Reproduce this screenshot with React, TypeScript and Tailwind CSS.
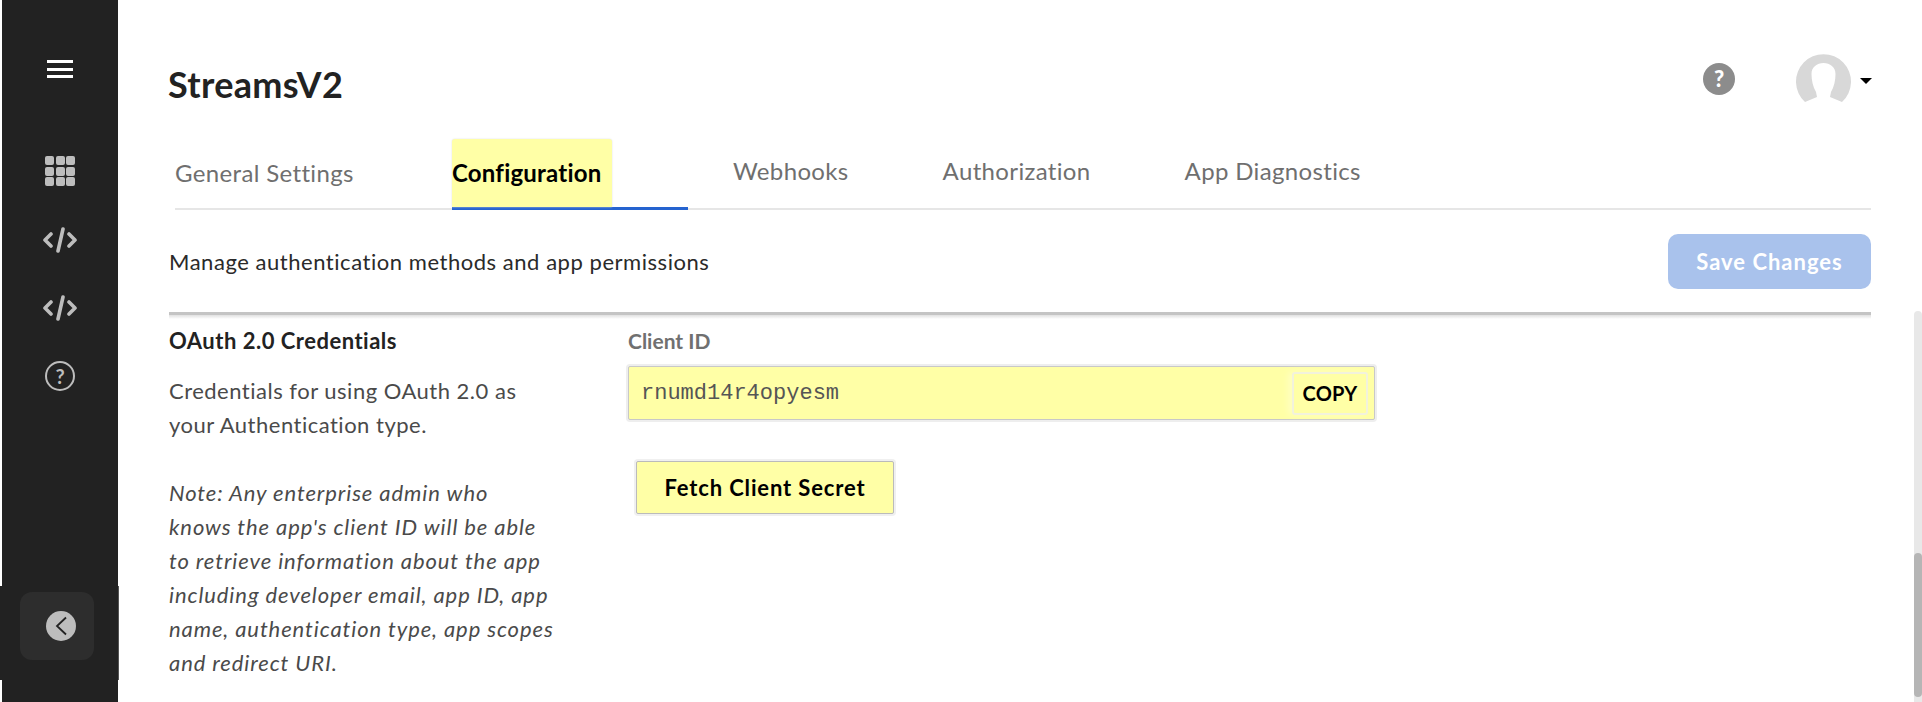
import React from "react";

const tabs = ["Webhooks", "Authorization", "App Diagnostics"];

const CodeIcon = () => (
  <svg width="36" height="26" viewBox="0 0 36 26" fill="none" stroke="#bdbdbd" strokeWidth="3.6" strokeLinecap="round" strokeLinejoin="round">
    <path d="M9 7 3 13l6 6M27 7l6 6-6 6M21 2l-5 22" />
  </svg>
);

const Sidebar = () => (
  <div className="relative w-[116px] shrink-0 ml-[2px] h-[702px] bg-[#222222] flex flex-col items-center">
    <div className="mt-[60px] w-[26px] flex flex-col gap-[4.5px]">
      <div className="h-[3px] bg-white" />
      <div className="h-[3px] bg-white" />
      <div className="h-[3px] bg-white" />
    </div>
    <div className="mt-[78px] grid grid-cols-3 gap-[1.5px] w-[30px]">
      {Array.from({ length: 9 }).map((_, i) => (
        <div key={i} className="h-[9px] rounded-[2px] bg-[#bdbdbd]" />
      ))}
    </div>
    <div className="mt-[41px]"><CodeIcon /></div>
    <div className="mt-[42px]"><CodeIcon /></div>
    <div className="mt-[40px] w-[30px] h-[30px] rounded-full border-2 border-[#bdbdbd] flex items-center justify-center text-[#bdbdbd] text-[20px] font-bold leading-none">?</div>
    <div className="absolute left-[-2px] top-[586px] w-[119px] h-[94px] pt-[6px] pl-[20px] bg-[#222222] border-r border-[#555555]">
      <div className="w-[74px] h-[68px] pl-[26px] rounded-[12px] bg-[#2d2d2d] flex items-center">
        <div className="w-[30px] h-[30px] rounded-full bg-[#bdbdbd] flex items-center justify-center">
          <svg width="14" height="20" viewBox="0 0 14 20" fill="none" stroke="#222222" strokeWidth="1.8">
            <path d="M12 1.5 3 10l9 8.5" />
          </svg>
        </div>
      </div>
    </div>
  </div>
);

const Header = () => (
  <div className="flex items-start justify-between h-[135px]">
    <h1 className="mt-[60px] -ml-[1px] text-[36px] leading-[48px] font-bold tracking-[0.3px] text-[#222222]">StreamsV2</h1>
    <div className="flex items-start mt-[54px] -mr-[1px]">
      <div className="mt-[9px] w-[32px] h-[32px] rounded-full bg-[#8c8c8c] flex items-center justify-center text-white text-[22px] font-black leading-none">?</div>
      <svg className="ml-[61px]" width="55" height="48" viewBox="0 0 55 48">
        <path
          fill="#d8d8d8"
          d="M9 48A27.5 27.5 0 1 1 46 48L34 43 35 38C38 33 39.5 26 39.5 20 39.5 13 34 9 27.5 9 21 9 15.5 13 15.5 20 15.5 26 17 33 20 38L21 43Z"
        />
      </svg>
      <div className="ml-[9px] mt-[24px] w-0 h-0 border-x-[6px] border-x-transparent border-t-[6px] border-t-black" />
    </div>
  </div>
);

const Tabs = () => (
  <div className="flex items-end h-[75px] border-b-2 border-[#e6e6e6] ml-[6px] text-[24px] tracking-[0.35px] text-[#6f6f6f]">
    <div className="w-[277px] h-[73px] flex items-center pt-[3px]">General Settings</div>
    <div className="w-[236px] h-[75px] -mb-[2px] pt-[4px] border-b-[3px] border-[#2563cf]">
      <div className="h-[68px] w-[160px] bg-[#ffffa6] rounded-t-[3px] shadow-[0_0_2px_#dddddd] flex items-center text-black font-bold tracking-[0.2px]">Configuration</div>
    </div>
    <div className="flex h-[73px] items-center pb-[1px]">
      {tabs.map((t, i) => (
        <div key={t} className={i === 0 ? "ml-[45px]" : "ml-[94px]"}>{t}</div>
      ))}
    </div>
  </div>
);

const Credentials = () => (
  <div className="flex mt-[8px]">
    <div className="w-[459px] shrink-0 text-[22px] leading-[34px] text-[#4a4a4a] tracking-[0.5px]">
      <div className="font-bold text-[#222222] leading-[28px]">OAuth 2.0 Credentials</div>
      <p className="mt-[19px] w-[370px]">Credentials for using OAuth 2.0 as your Authentication type.</p>
      <p className="mt-[34px] w-[386px] italic tracking-[0.9px]">
        Note: Any enterprise admin who<br />
        knows the app's client ID will be able to retrieve information about the app including developer email, app ID, app name, authentication type, app scopes and redirect URI.
      </p>
    </div>
    <div>
      <div className="text-[21px] leading-[28px] font-bold text-[#707070]">Client ID</div>
      <div className="mt-[11px] w-[747px] h-[54px] flex items-center justify-between bg-[#ffffa6] border border-[#c8c8c8] rounded-[2px] shadow-[0_0_0_2px_#eeeeee]">
        <span className="ml-[12px] text-[#555555] text-[22px]" style={{ fontFamily: '"Liberation Mono", monospace' }}>rnumd14r4opyesm</span>
        <button className="mr-[6px] w-[76px] h-[43px] bg-[#ffffa6] border-2 border-[#f2f2dc] rounded-[3px] shadow-[-4px_0_6px_#ffffc0] text-black text-[20px] font-bold tracking-[0.25px]">COPY</button>
      </div>
      <button className="block mt-[41px] ml-[8px] w-[258px] h-[53px] bg-[#ffffa6] border border-[#bbbbbb] rounded-[2px] shadow-[0_0_0_2px_#f0f0f0] text-black text-[22px] font-bold tracking-[0.85px]">Fetch Client Secret</button>
    </div>
  </div>
);

export default function App() {
  return (
    <div className="relative flex h-[702px] w-[1922px] overflow-hidden bg-white" style={{ fontFamily: 'Lato, "Open Sans", sans-serif' }}>
      <Sidebar />
      <main className="ml-[51px] w-[1702px] shrink-0">
        <Header />
        <Tabs />
        <div className="flex items-center justify-between h-[105px] border-b-[3px] border-[#c4c4c4]">
          <p className="text-[22px] tracking-[0.54px] text-[#2a2a2a]">Manage authentication methods and app permissions</p>
          <button className="w-[203px] h-[55px] rounded-[10px] bg-[#a9c2ec] text-white text-[22px] font-bold tracking-[1px]">Save Changes</button>
        </div>
        <div className="h-[4px] bg-gradient-to-b from-[#e0e0e0] to-white" />
        <Credentials />
      </main>
      <div className="absolute right-0 top-[311px] w-[8px] h-[391px] rounded-t-[4px] bg-[#e8e8e8]">
        <div className="mt-[242px] h-[144px] rounded-[4px] bg-[#b5b5b5]" />
      </div>
    </div>
  );
}
